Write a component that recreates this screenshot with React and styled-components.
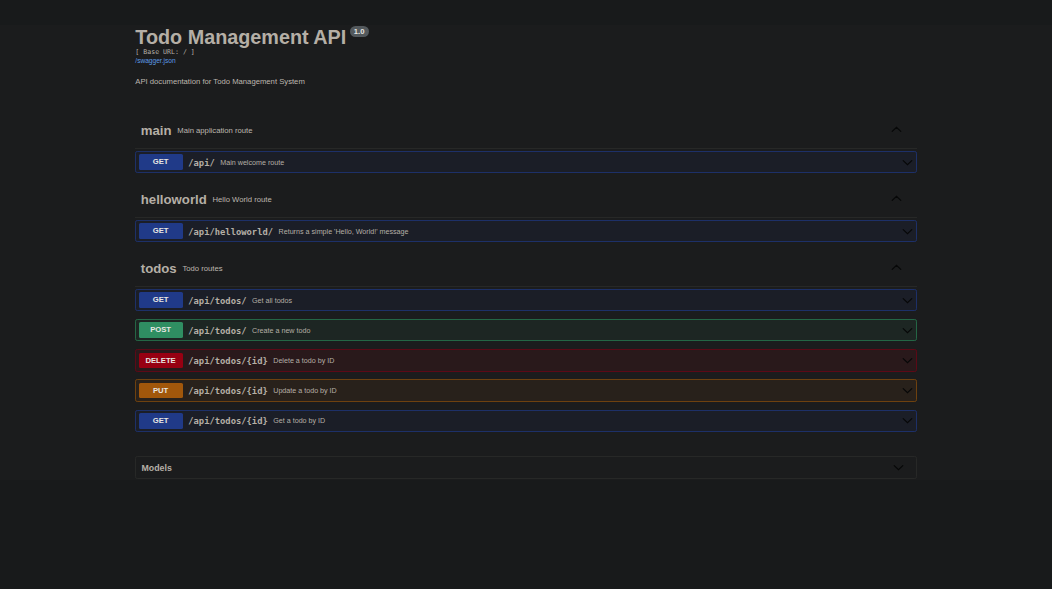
import React from "react";
import styled, { createGlobalStyle } from "styled-components";

const GlobalStyle = createGlobalStyle`
  * { box-sizing: border-box; }
  html, body { margin: 0; background: #181a1b; overflow: hidden; }
  body { font-family: "Liberation Sans", Arial, sans-serif; color: #b5afa6; }
`;

const Page = styled.div`
  height: 589px;
  padding-top: 25px;
  background: #181a1b;
`;

const Content = styled.main`
  height: 455px;
  padding: 0 135.5px 0 135.3px;
  background: #1b1c1d;
`;

const Info = styled.header`
  height: 87.08px;
`;

const Title = styled.h1`
  display: flex;
  align-items: flex-start;
  margin: 0;
  height: 22.6px;
  font-size: 19.8px;
  line-height: 25px;
  white-space: nowrap;
`;

const Version = styled.span`
  margin: 0.5px 0 0 3.3px;
  width: 19px;
  height: 11px;
  border-radius: 6px;
  background: #53595d;
  color: #e8e6e3;
  font-size: 7.7px;
  font-weight: 700;
  line-height: 11.5px;
  text-align: center;
`;

const BaseUrl = styled.pre`
  margin: 0;
  font: 6.6px/9px "DejaVu Sans Mono", monospace;
  color: #b5afa6;
`;

const SpecLink = styled.a`
  display: block;
  font-size: 6.6px;
  line-height: 8.4px;
  color: #5c9be8;
`;

const Description = styled.p`
  margin: 11.2px 0 0;
  font-size: 7.7px;
  line-height: 12px;
  color: #bdb7af;
`;

const TagHeader = styled.h2`
  display: flex;
  align-items: center;
  justify-content: space-between;
  margin: 0 0 2.25px;
  height: 36.55px;
  padding: 0 14.8px 0 5.5px;
  border-bottom: 1px solid #272827;
  font-size: 13.2px;
  line-height: 16px;
`;

const TagText = styled.span`
  display: flex;
  align-items: center;
  padding-top: 1.6px;
`;

const TagNote = styled.small`
  margin-left: 5.7px;
  font-size: 7.7px;
  font-weight: 400;
  color: #bdb7af;
`;

const Operation = styled.div`
  display: flex;
  align-items: center;
  height: 22.4px;
  margin-bottom: 7.8px;
  padding: 0 3px 0 2.3px;
  border: 1px solid ${(p) => p.$tone.border};
  border-radius: 2.2px;
  background: ${(p) => p.$tone.fill};
`;

const Method = styled.span`
  width: 44px;
  height: 15.6px;
  border-radius: 1.6px;
  background: ${(p) => p.$tone.badge};
  color: #e8e6e3;
  font-size: 7.7px;
  font-weight: 700;
  line-height: 16.6px;
  text-align: center;
`;

const Path = styled.span`
  margin-left: 5.7px;
  padding-top: 1.4px;
  font: 700 8.8px/12px "DejaVu Sans Mono", monospace;
`;

const Summary = styled.span`
  flex: 1;
  margin-left: 5.5px;
  padding-top: 1.4px;
  font-size: 7.15px;
  line-height: 10px;
  color: #b5afa6;
`;

const Models = styled.section`
  display: flex;
  align-items: center;
  justify-content: space-between;
  height: 23px;
  margin-top: 24.4px;
  padding: 0 11.2px 0 5.2px;
  border: 1px solid #272827;
  border-radius: 2.2px;
  font-size: 8.8px;
  font-weight: 700;
`;

const Chevron = styled.svg`
  display: block;
  width: 11px;
  height: 11px;
  flex: none;
  fill: none;
  stroke: #060707;
  stroke-width: 1.15;
  stroke-linecap: round;
`;

const Arrow = ({ up }) => (
  <Chevron viewBox="0 0 11 11">
    <path d={up ? "M1.2 7.4 5.5 3.3 9.8 7.4" : "M1.2 3.6 5.5 7.7 9.8 3.6"} />
  </Chevron>
);

const tones = {
  GET: { badge: "#203a88", border: "#1d3068", fill: "#1b1e27" },
  POST: { badge: "#2f8e62", border: "#246645", fill: "#1d2623" },
  DELETE: { badge: "#970012", border: "#5c0916", fill: "#29191b" },
  PUT: { badge: "#a1570b", border: "#6e410f", fill: "#28211b" },
};

const groups = [
  { name: "main", note: "Main application route", ops: [["GET", "/api/", "Main welcome route"]] },
  {
    name: "helloworld",
    note: "Hello World route",
    ops: [["GET", "/api/helloworld/", "Returns a simple 'Hello, World!' message"]],
  },
  {
    name: "todos",
    note: "Todo routes",
    ops: [
      ["GET", "/api/todos/", "Get all todos"],
      ["POST", "/api/todos/", "Create a new todo"],
      ["DELETE", "/api/todos/{id}", "Delete a todo by ID"],
      ["PUT", "/api/todos/{id}", "Update a todo by ID"],
      ["GET", "/api/todos/{id}", "Get a todo by ID"],
    ],
  },
];

export default function App() {
  return (
    <Page>
      <GlobalStyle />
      <Content>
        <Info>
          <Title>
            Todo Management API<Version>1.0</Version>
          </Title>
          <BaseUrl>[ Base URL: / ]</BaseUrl>
          <SpecLink>/swagger.json</SpecLink>
          <Description>API documentation for Todo Management System</Description>
        </Info>
        {groups.map((group) => (
          <section key={group.name}>
            <TagHeader>
              <TagText>
                {group.name}
                <TagNote>{group.note}</TagNote>
              </TagText>
              <Arrow up />
            </TagHeader>
            {group.ops.map(([method, path, summary]) => (
              <Operation key={method + path} $tone={tones[method]}>
                <Method $tone={tones[method]}>{method}</Method>
                <Path>{path}</Path>
                <Summary>{summary}</Summary>
                <Arrow />
              </Operation>
            ))}
          </section>
        ))}
        <Models>
          Models
          <Arrow />
        </Models>
      </Content>
    </Page>
  );
}
